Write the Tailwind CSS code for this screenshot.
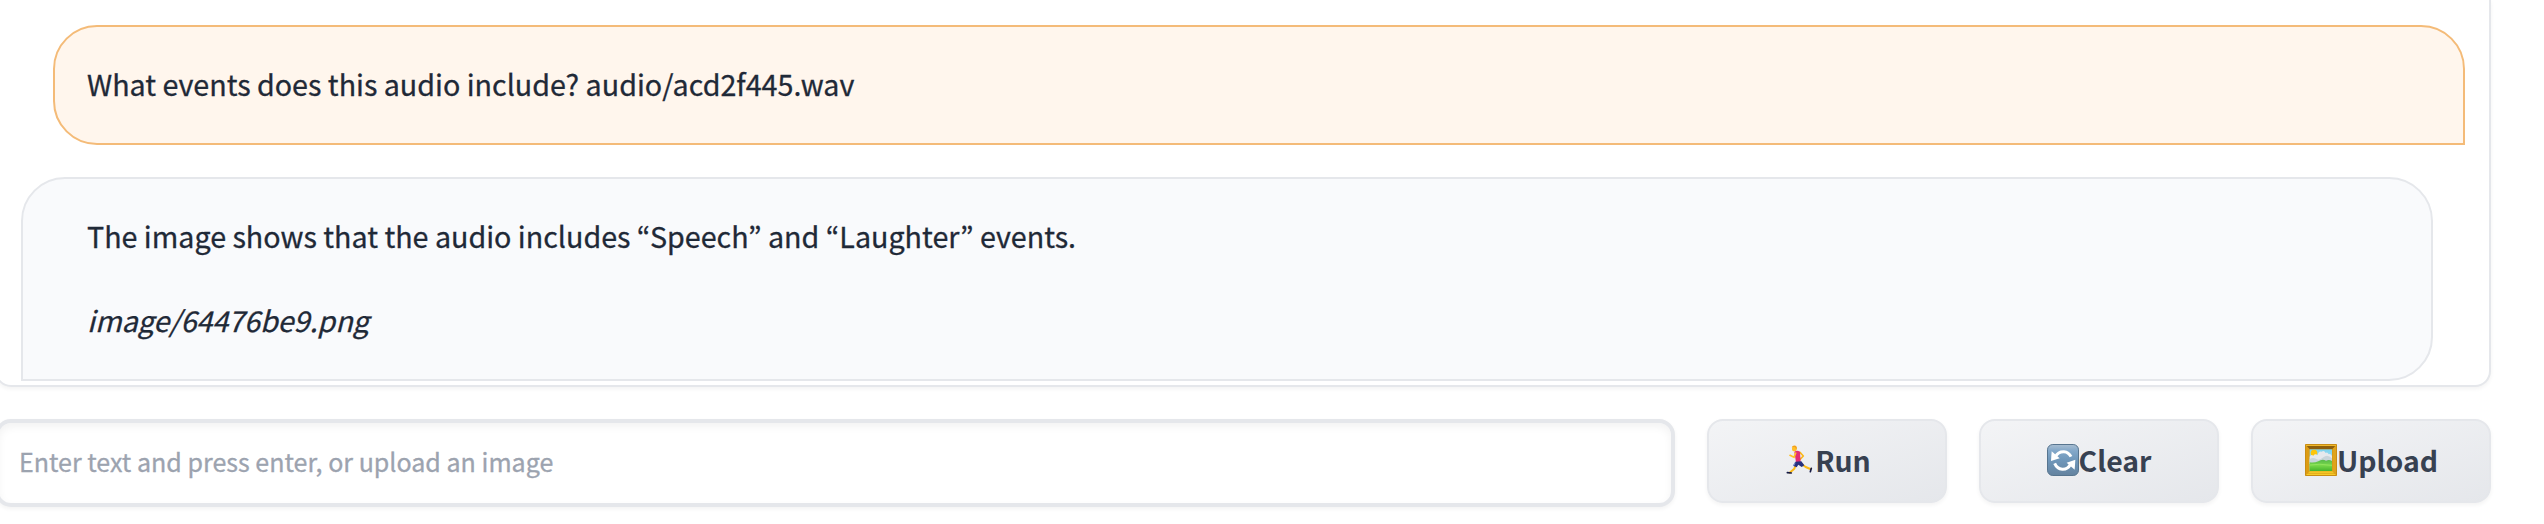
<!DOCTYPE html>
<html lang="en">
<head>
<meta charset="utf-8">
<title>Audio chat</title>
<script src="https://cdn.jsdelivr.net/npm/@tailwindcss/browser@4"></script>
</head>
<body class="h-[524px] overflow-hidden bg-white font-['Noto_Sans_CJK_KR',sans-serif] text-[28.67px] leading-[48px] text-[#1f2937]">
<main class="-ml-[5px] flex w-[2496px] flex-col gap-8">
  <section class="flex h-[387px] flex-col gap-8 rounded-b-2xl border-2 border-t-0 border-[#e5e7eb] bg-white px-6 pt-[25px] shadow-[0_2px_4px_rgba(0,0,0,0.05)] [-webkit-text-stroke:0.3px]">
    <div class="ml-8 h-[120px] shrink-0 rounded-[44px] rounded-br-none border-2 border-[#f4bb78] bg-[#fff6ed] px-8 pt-[33px]">
      <p>What events does this audio include? audio/acd2f445.wav</p>
    </div>
    <div class="mr-8 h-[204px] shrink-0 rounded-[44px] rounded-bl-none border-2 border-[#e5e7eb] bg-[#f9fafc] px-16 pt-[33px]">
      <p>The image shows that the audio includes “Speech” and “Laughter” events.</p>
      <p class="mt-9 italic">image/64476be9.png</p>
    </div>
  </section>
  <section class="flex items-start gap-8">
    <input type="text" placeholder="Enter text and press enter, or upload an image" class="h-[88px] w-[1680px] rounded-2xl border-4 border-[#e5e7eb] bg-white px-5 pb-[5px] text-[25.05px] leading-[48px] [-webkit-text-stroke:0.3px] placeholder:text-[#9ca3af] placeholder:opacity-100 shadow-[0_2px_4px_rgba(0,0,0,0.05),inset_0_4px_8px_rgba(0,0,0,0.05)]">
    <button class="flex h-[84px] w-60 items-start justify-center rounded-2xl border-2 border-[#e5e7eb] bg-linear-to-br from-[#f3f4f6] to-[#e5e7eb] pt-[15px] text-[28.4px] font-semibold text-[#374151] shadow-[0_2px_4px_rgba(0,0,0,0.05)]">
      <!-- Runner -->
      <svg class="mt-2 size-8 shrink-0" viewBox="0 0 96 96" fill="none" stroke-linecap="round" stroke-linejoin="round">
        <path d="M51 25L61 36L51 46" stroke="#f9b81c" stroke-width="5"/>
        <path d="M40 58L34 74L20 86" stroke="#fbb917" stroke-width="6"/>
        <path d="M57 61L68 69L82 75" stroke="#fbb917" stroke-width="6"/>
        <path d="M13 86L25 87" stroke="#171b44" stroke-width="5"/>
        <path d="M85 73L82 83" stroke="#171b44" stroke-width="5"/>
        <path d="M34 23Q42 17 51 23L53 54L39 55Z" fill="#e32d72"/>
        <path d="M37 53L55 52L64 64L56 69L46 62L41 70L30 65Z" fill="#27317f"/>
        <path d="M36 57L32 65" stroke="#7f9ddd" stroke-width="3"/>
        <path d="M38 27L33 40L21 34" stroke="#fdc129" stroke-width="5"/>
        <ellipse cx="34" cy="14" rx="7" ry="8" fill="#ffbf28"/>
        <path d="M26 10Q30 2 38 5Q44 9 40 17L36 9Z" fill="#f3a11b"/>
      </svg>
      <span>Run</span>
    </button>
    <button class="flex h-[84px] w-60 items-start justify-center rounded-2xl border-2 border-[#e5e7eb] bg-linear-to-br from-[#f3f4f6] to-[#e5e7eb] pt-[15px] text-[28.4px] font-semibold text-[#374151] shadow-[0_2px_4px_rgba(0,0,0,0.05)]">
      <!-- Counterclockwise arrows -->
      <svg class="mt-2 size-8 shrink-0" viewBox="0 0 96 96" fill="none">
        <defs>
          <linearGradient id="blue" x1="0" y1="0" x2="0" y2="1"><stop offset="0" stop-color="#a9bed1"/><stop offset=".2" stop-color="#83a8c9"/><stop offset=".5" stop-color="#6f97ba"/><stop offset="1" stop-color="#64839f"/></linearGradient>
        </defs>
        <rect x="1.5" y="1.5" width="93" height="93" rx="16" fill="url(#blue)" stroke="#57758f" stroke-width="3"/>
        <path d="M25 38Q34 22 51 23Q65 24 72 38" stroke="#fff" stroke-width="9"/>
        <path d="M14 22L12 51L38 43Z" fill="#fff"/>
        <path d="M71 61Q62 77 46 76Q30 74 23 58" stroke="#fff" stroke-width="9"/>
        <path d="M85 47L83 77L59 56Z" fill="#fff"/>
      </svg>
      <span>Clear</span>
    </button>
    <button class="flex h-[84px] w-60 items-start justify-center rounded-2xl border-2 border-[#e5e7eb] bg-linear-to-br from-[#f3f4f6] to-[#e5e7eb] pt-[15px] text-[28.4px] font-semibold text-[#374151] shadow-[0_2px_4px_rgba(0,0,0,0.05)]">
      <!-- Framed landscape -->
      <svg class="mt-2 ml-px size-8 shrink-0" viewBox="0 0 96 96">
        <defs>
          <linearGradient id="sky" x1="0" y1="0" x2="0" y2="1"><stop offset="0" stop-color="#7dd3ee"/><stop offset="1" stop-color="#c9ecf4"/></linearGradient>
          <linearGradient id="grass" x1="0" y1="0" x2="0" y2="1"><stop offset="0" stop-color="#55b84b"/><stop offset=".5" stop-color="#79d84a"/><stop offset="1" stop-color="#45b52d"/></linearGradient>
        </defs>
        <rect width="96" height="96" rx="2" fill="#c98d13"/>
        <path d="M3 3H93L82 16H14Z" fill="#8d5f0c"/>
        <path d="M3 3H93V6H3Z" fill="#efb92c"/>
        <path d="M3 5L14 16V82L3 93Z" fill="#dc9c13"/>
        <path d="M93 5L82 16V82L93 93Z" fill="#dfa31b"/>
        <path d="M3 93L14 82H82L93 93Z" fill="#f7cb29"/>
        <path d="M5 88H91" stroke="#d99b12" stroke-width="2"/>
        <rect x="14" y="16" width="67" height="65" fill="url(#sky)"/>
        <circle cx="27" cy="27" r="10" fill="#fdc60b"/>
        <path d="M14 38Q18 30 25 35Q31 27 38 34Q40 20 50 23Q57 17 62 27Q67 22 71 31Q77 28 81 36V60H14Z" fill="#e5e9ed"/>
        <path d="M14 45Q25 39 34 45T55 40T81 43V60H14Z" fill="#c8d5db"/>
        <path d="M14 55Q28 57 40 52Q52 43 63 50Q73 46 81 51V81H14Z" fill="url(#grass)"/>
        <path d="M14 63Q42 58 81 64" stroke="#91e45d" stroke-width="3" fill="none"/>
      </svg>
      <span>Upload</span>
    </button>
  </section>
</main>
</body>
</html>
